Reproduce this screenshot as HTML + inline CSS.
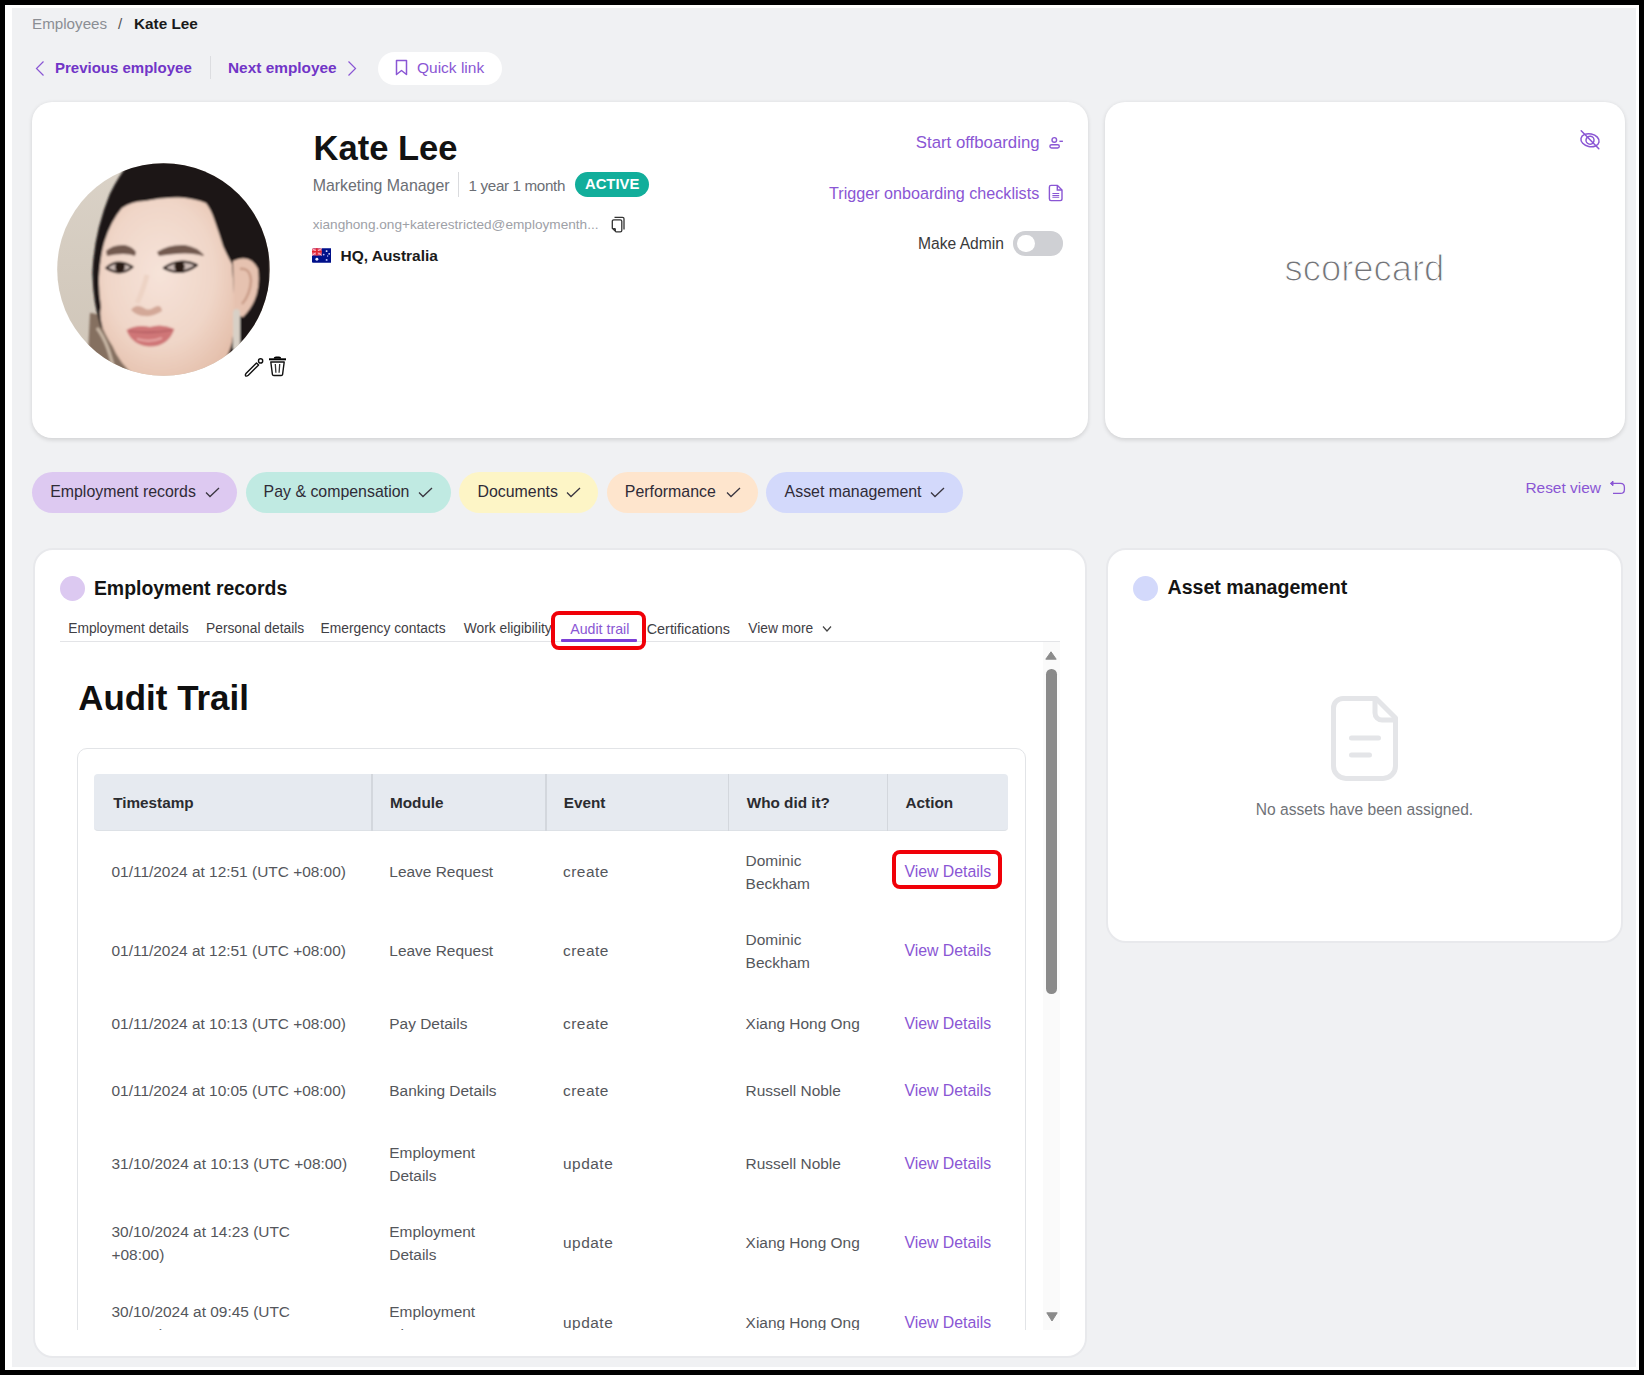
<!DOCTYPE html>
<html><head><meta charset="utf-8">
<style>
*{margin:0;padding:0;box-sizing:border-box}
html,body{width:1644px;height:1375px;overflow:hidden;background:#000}
body{position:relative;font-family:"Liberation Sans",sans-serif;color:#1c1c1c}
.frame{position:absolute;left:5px;top:5px;width:1634px;height:1365px;background:#fff}
.bg{position:absolute;left:12px;top:8px;width:1624px;height:1359px;background:#f0f1f3}
.a{position:absolute;white-space:nowrap;line-height:1}
.card{position:absolute;background:#fff;border-radius:20px}
</style></head><body>
<div class="frame"></div>
<div class="bg"></div>
<div class="a" style="left:32px;top:15.8px;font-size:15.2px;color:#8b8e94;">Employees</div>
<div class="a" style="left:118px;top:15.8px;font-size:15.2px;color:#555;">/</div>
<div class="a" style="left:134px;top:15.7px;font-size:15.3px;font-weight:700;color:#1a1a1a;">Kate Lee</div>
<svg class="a" style="left:34px;top:60px" width="12" height="17" viewBox="0 0 12 17"><path d="M9.5 1.5 L2.5 8.5 L9.5 15.5" fill="none" stroke="#8a56d4" stroke-width="1.2"/></svg>
<div class="a" style="left:55px;top:60.3px;font-size:15px;font-weight:700;color:#7135c7;">Previous employee</div>
<div class="a" style="left:210px;top:56px;width:1px;height:23px;background:#dcdde0"></div>
<div class="a" style="left:228px;top:60.0px;font-size:15.4px;font-weight:700;color:#7135c7;">Next employee</div>
<svg class="a" style="left:346px;top:60px" width="12" height="17" viewBox="0 0 12 17"><path d="M2.5 1.5 L9.5 8.5 L2.5 15.5" fill="none" stroke="#8a56d4" stroke-width="1.2"/></svg>
<div class="a" style="left:378px;top:52px;width:124px;height:33px;background:#fff;border-radius:17px"></div>
<svg class="a" style="left:394px;top:59px" width="15" height="17" viewBox="0 0 15 17"><path d="M2.5 1.5 H12.5 V15.5 L7.5 11.5 L2.5 15.5 Z" fill="none" stroke="#8a56d4" stroke-width="1.5" stroke-linejoin="round"/></svg>
<div class="a" style="left:417px;top:59.9px;font-size:15.5px;color:#8a56d4;">Quick link</div>
<div class="card" style="left:32px;top:102px;width:1056px;height:336px;box-shadow:0 1.5px 4px rgba(0,0,0,0.13)"></div>
<div class="card" style="left:1105px;top:102px;width:520px;height:336px;box-shadow:0 1.5px 4px rgba(0,0,0,0.13)"></div>
<div class="a" style="left:313.6px;top:130.8px;font-size:34.5px;font-weight:700;color:#121212;">Kate Lee</div>
<div class="a" style="left:312.7px;top:177.7px;font-size:15.9px;color:#6b6e74;">Marketing Manager</div>
<div class="a" style="left:458px;top:172px;width:1px;height:25px;background:#dadbde"></div>
<div class="a" style="left:468.6px;top:178.3px;font-size:15.2px;color:#6b6e74;letter-spacing:-0.35px;">1 year 1 month</div>
<div class="a" style="left:574.5px;top:172.3px;width:74px;height:25px;border-radius:12.5px;background:#12ae9b"></div>
<div class="a" style="left:585px;top:177.4px;font-size:14.8px;font-weight:700;color:#ffffff;">ACTIVE</div>
<div class="a" style="left:312.7px;top:218.0px;font-size:13.62px;color:#9ea1a7;">xianghong.ong+katerestricted@employmenth...</div>
<div class="a" style="left:340.5px;top:247.5px;font-size:15.48px;font-weight:700;color:#1a1a1a;">HQ, Australia</div>
<div class="a" style="left:915.8px;top:134.5px;font-size:16.8px;color:#8a56d4;">Start offboarding</div>
<div class="a" style="left:829px;top:184.8px;font-size:16.15px;color:#8a56d4;">Trigger onboarding checklists</div>
<div class="a" style="left:918px;top:235.8px;font-size:15.63px;color:#3a3a3a;">Make Admin</div>
<div class="a" style="left:1284.5px;top:251.2px;font-size:36.4px;color:#737478;-webkit-text-stroke:1.1px #fff;">scorecard</div>
<div class="a" style="left:32px;top:471.7px;width:205.2px;height:41.2px;border-radius:21px;background:#ddc9f1"></div>
<div class="a" style="left:50.2px;top:484.0px;font-size:15.9px;color:#2f2b37;">Employment records</div>
<svg class="a" style="left:205px;top:487px" width="15" height="11" viewBox="0 0 15 11"><path d="M1 5.5 L5 9.5 L14 1" fill="none" stroke="#3a3640" stroke-width="1.3"/></svg>
<div class="a" style="left:245.6px;top:471.7px;width:205.3px;height:41.2px;border-radius:21px;background:#c0eae2"></div>
<div class="a" style="left:263.6px;top:484.0px;font-size:15.9px;color:#2f2b37;">Pay &amp; compensation</div>
<svg class="a" style="left:418.3px;top:487px" width="15" height="11" viewBox="0 0 15 11"><path d="M1 5.5 L5 9.5 L14 1" fill="none" stroke="#3a3640" stroke-width="1.3"/></svg>
<div class="a" style="left:459.4px;top:471.7px;width:138.9px;height:41.2px;border-radius:21px;background:#fdf5c6"></div>
<div class="a" style="left:477.5px;top:484.0px;font-size:15.9px;color:#2f2b37;">Documents</div>
<svg class="a" style="left:565.7px;top:487px" width="15" height="11" viewBox="0 0 15 11"><path d="M1 5.5 L5 9.5 L14 1" fill="none" stroke="#3a3640" stroke-width="1.3"/></svg>
<div class="a" style="left:607.2px;top:471.7px;width:150.4px;height:41.2px;border-radius:21px;background:#fee5cd"></div>
<div class="a" style="left:624.8px;top:484.0px;font-size:15.9px;color:#2f2b37;">Performance</div>
<svg class="a" style="left:725.6px;top:487px" width="15" height="11" viewBox="0 0 15 11"><path d="M1 5.5 L5 9.5 L14 1" fill="none" stroke="#3a3640" stroke-width="1.3"/></svg>
<div class="a" style="left:765.9px;top:471.7px;width:196.9px;height:41.2px;border-radius:21px;background:#d3d9fb"></div>
<div class="a" style="left:784.6px;top:484.0px;font-size:15.9px;color:#2f2b37;">Asset management</div>
<svg class="a" style="left:929.7px;top:487px" width="15" height="11" viewBox="0 0 15 11"><path d="M1 5.5 L5 9.5 L14 1" fill="none" stroke="#3a3640" stroke-width="1.3"/></svg>
<div class="a" style="left:1525.4px;top:479.9px;font-size:15.46px;color:#8a56d4;">Reset view</div>
<div class="a" style="left:33px;top:548px;width:1054px;height:810px;border:2px solid #e8e9ec;border-radius:20px;background:#fff"></div>
<div class="a" style="left:60px;top:575.7px;width:25px;height:25px;border-radius:50%;background:#dcc9f1"></div>
<div class="a" style="left:93.9px;top:579.0px;font-size:19.45px;font-weight:700;color:#141414;">Employment records</div>
<div class="a" style="left:68.2px;top:622.4px;font-size:13.8px;color:#3f4045;">Employment details</div>
<div class="a" style="left:206px;top:622.4px;font-size:13.8px;color:#3f4045;">Personal details</div>
<div class="a" style="left:320.6px;top:622.4px;font-size:13.8px;color:#3f4045;">Emergency contacts</div>
<div class="a" style="left:463.8px;top:622.4px;font-size:13.8px;color:#3f4045;">Work eligibility</div>
<div class="a" style="left:646.7px;top:621.9px;font-size:14.4px;color:#3f4045;">Certifications</div>
<div class="a" style="left:748.3px;top:622.4px;font-size:13.8px;color:#3f4045;">View more</div>
<div class="a" style="left:570.2px;top:622.1px;font-size:14.2px;color:#8a56d4;">Audit trail</div>
<svg class="a" style="left:822px;top:625px" width="10" height="8" viewBox="0 0 10 8"><path d="M1 1.5 L5 6 L9 1.5" fill="none" stroke="#444" stroke-width="1.2"/></svg>
<div class="a" style="left:60px;top:640.6px;width:1000px;height:1.2px;background:#e3e4e7"></div>
<div class="a" style="left:561.4px;top:638.8px;width:76px;height:3px;background:#7b3fd6;border-radius:1px"></div>
<div class="a" style="left:551.2px;top:611px;width:94.6px;height:38.6px;border:4.8px solid #f00008;border-radius:8px"></div>
<div class="a" style="left:60px;top:642px;width:1000px;height:688px;overflow:hidden">
<div class="a" style="left:18.299999999999997px;top:38.9px;font-size:34.9px;font-weight:700;color:#0f0f0f;">Audit Trail</div>
<div class="a" style="left:17.4px;top:105.8px;width:949px;height:700px;border:1px solid #e2e4e7;border-radius:10px"></div>
<div class="a" style="left:34px;top:131.5px;width:913.6px;height:57.5px;background:#e6eaf0;border-radius:4px;border-bottom:1px solid #dde1e6"></div>
<div class="a" style="left:311.2px;top:131.5px;width:1.5px;height:57.5px;background:#d3d7dd"></div>
<div class="a" style="left:485.0px;top:131.5px;width:1.5px;height:57.5px;background:#d3d7dd"></div>
<div class="a" style="left:667.8px;top:131.5px;width:1.5px;height:57.5px;background:#d3d7dd"></div>
<div class="a" style="left:826.9px;top:131.5px;width:1.5px;height:57.5px;background:#d3d7dd"></div>
<div class="a" style="left:53.2px;top:153.4px;font-size:15.3px;font-weight:700;color:#2b2c30;">Timestamp</div>
<div class="a" style="left:330px;top:153.4px;font-size:15.3px;font-weight:700;color:#2b2c30;">Module</div>
<div class="a" style="left:503.79999999999995px;top:153.4px;font-size:15.3px;font-weight:700;color:#2b2c30;">Event</div>
<div class="a" style="left:686.7px;top:153.4px;font-size:15.3px;font-weight:700;color:#2b2c30;">Who did it?</div>
<div class="a" style="left:845.5px;top:153.4px;font-size:15.3px;font-weight:700;color:#2b2c30;">Action</div>
<div class="a" style="left:51.5px;top:222.4px;font-size:15.45px;color:#54565b;">01/11/2024 at 12:51 (UTC +08:00)</div>
<div class="a" style="left:329.3px;top:222.4px;font-size:15.45px;color:#54565b;">Leave Request</div>
<div class="a" style="left:503px;top:222.4px;font-size:15.45px;color:#54565b;letter-spacing:0.5px;">create</div>
<div class="a" style="left:685.6px;top:211.2px;font-size:15.45px;color:#54565b;">Dominic</div>
<div class="a" style="left:685.6px;top:233.7px;font-size:15.45px;color:#54565b;">Beckham</div>
<div class="a" style="left:844.4px;top:222.1px;font-size:15.85px;color:#8a56d4;">View Details</div>
<div class="a" style="left:51.5px;top:301.4px;font-size:15.45px;color:#54565b;">01/11/2024 at 12:51 (UTC +08:00)</div>
<div class="a" style="left:329.3px;top:301.4px;font-size:15.45px;color:#54565b;">Leave Request</div>
<div class="a" style="left:503px;top:301.4px;font-size:15.45px;color:#54565b;letter-spacing:0.5px;">create</div>
<div class="a" style="left:685.6px;top:290.2px;font-size:15.45px;color:#54565b;">Dominic</div>
<div class="a" style="left:685.6px;top:312.7px;font-size:15.45px;color:#54565b;">Beckham</div>
<div class="a" style="left:844.4px;top:301.1px;font-size:15.85px;color:#8a56d4;">View Details</div>
<div class="a" style="left:51.5px;top:374.1px;font-size:15.45px;color:#54565b;">01/11/2024 at 10:13 (UTC +08:00)</div>
<div class="a" style="left:329.3px;top:374.1px;font-size:15.45px;color:#54565b;">Pay Details</div>
<div class="a" style="left:503px;top:374.1px;font-size:15.45px;color:#54565b;letter-spacing:0.5px;">create</div>
<div class="a" style="left:685.6px;top:374.1px;font-size:15.45px;color:#54565b;">Xiang Hong Ong</div>
<div class="a" style="left:844.4px;top:373.8px;font-size:15.85px;color:#8a56d4;">View Details</div>
<div class="a" style="left:51.5px;top:441.2px;font-size:15.45px;color:#54565b;">01/11/2024 at 10:05 (UTC +08:00)</div>
<div class="a" style="left:329.3px;top:441.2px;font-size:15.45px;color:#54565b;">Banking Details</div>
<div class="a" style="left:503px;top:441.2px;font-size:15.45px;color:#54565b;letter-spacing:0.5px;">create</div>
<div class="a" style="left:685.6px;top:441.2px;font-size:15.45px;color:#54565b;">Russell Noble</div>
<div class="a" style="left:844.4px;top:440.9px;font-size:15.85px;color:#8a56d4;">View Details</div>
<div class="a" style="left:51.5px;top:514.2px;font-size:15.45px;color:#54565b;">31/10/2024 at 10:13 (UTC +08:00)</div>
<div class="a" style="left:329.3px;top:503.0px;font-size:15.45px;color:#54565b;">Employment</div>
<div class="a" style="left:329.3px;top:525.5px;font-size:15.45px;color:#54565b;">Details</div>
<div class="a" style="left:503px;top:514.2px;font-size:15.45px;color:#54565b;letter-spacing:0.5px;">update</div>
<div class="a" style="left:685.6px;top:514.2px;font-size:15.45px;color:#54565b;">Russell Noble</div>
<div class="a" style="left:844.4px;top:513.9px;font-size:15.85px;color:#8a56d4;">View Details</div>
<div class="a" style="left:51.5px;top:582.2px;font-size:15.45px;color:#54565b;">30/10/2024 at 14:23 (UTC</div>
<div class="a" style="left:51.5px;top:604.7px;font-size:15.45px;color:#54565b;">+08:00)</div>
<div class="a" style="left:329.3px;top:582.2px;font-size:15.45px;color:#54565b;">Employment</div>
<div class="a" style="left:329.3px;top:604.7px;font-size:15.45px;color:#54565b;">Details</div>
<div class="a" style="left:503px;top:593.4px;font-size:15.45px;color:#54565b;letter-spacing:0.5px;">update</div>
<div class="a" style="left:685.6px;top:593.4px;font-size:15.45px;color:#54565b;">Xiang Hong Ong</div>
<div class="a" style="left:844.4px;top:593.1px;font-size:15.85px;color:#8a56d4;">View Details</div>
<div class="a" style="left:51.5px;top:662.2px;font-size:15.45px;color:#54565b;">30/10/2024 at 09:45 (UTC</div>
<div class="a" style="left:51.5px;top:684.7px;font-size:15.45px;color:#54565b;">+08:00)</div>
<div class="a" style="left:329.3px;top:662.2px;font-size:15.45px;color:#54565b;">Employment</div>
<div class="a" style="left:329.3px;top:684.7px;font-size:15.45px;color:#54565b;">History</div>
<div class="a" style="left:503px;top:673.4px;font-size:15.45px;color:#54565b;letter-spacing:0.5px;">update</div>
<div class="a" style="left:685.6px;top:673.4px;font-size:15.45px;color:#54565b;">Xiang Hong Ong</div>
<div class="a" style="left:844.4px;top:673.1px;font-size:15.85px;color:#8a56d4;">View Details</div>
<div class="a" style="left:832.3px;top:208px;width:109.4px;height:38.6px;border:4.8px solid #f00008;border-radius:8px"></div>
<div class="a" style="left:983px;top:0;width:17px;height:688px;background:#fafafa"></div>
<svg class="a" style="left:985px;top:9px" width="12" height="9" viewBox="0 0 12 9"><path d="M6 0.8 L11.2 8.2 L0.8 8.2 Z" fill="#8a8a8a" stroke="#8a8a8a" stroke-width="1" stroke-linejoin="round"/></svg>
<div class="a" style="left:986px;top:26.5px;width:10.5px;height:325px;border-radius:5.25px;background:#8a8a8a"></div>
<svg class="a" style="left:985.5px;top:670px" width="12" height="10" viewBox="0 0 12 10"><path d="M0.8 0.8 L11.2 0.8 L6 9 Z" fill="#8a8a8a" stroke="#8a8a8a" stroke-width="1" stroke-linejoin="round"/></svg>
</div>
<div class="a" style="left:1106px;top:548px;width:517px;height:395px;border:2px solid #e8e9ec;border-radius:20px;background:#fff"></div>
<div class="a" style="left:1133px;top:575.8px;width:25px;height:25px;border-radius:50%;background:#d3d9fb"></div>
<div class="a" style="left:1167.5px;top:578.2px;font-size:19.6px;font-weight:700;color:#141414;">Asset management</div>
<svg class="a" style="left:1329px;top:694px" width="71" height="89" viewBox="0 0 71 89"><path d="M14 4.5 H47 L66.5 24 V72 A12.5 12.5 0 0 1 54 84.5 H17 A12.5 12.5 0 0 1 4.5 72 V14 A9.5 9.5 0 0 1 14 4.5 Z" fill="none" stroke="#e4e5e8" stroke-width="5" stroke-linejoin="round"/><path d="M46 6 V19 A7 7 0 0 0 53 26 H65" fill="none" stroke="#e4e5e8" stroke-width="5"/><path d="M22.5 44 H49.5 M22.5 61 H40.5" stroke="#e4e5e8" stroke-width="5" stroke-linecap="round"/></svg>
<div class="a" style="left:1255.8px;top:801.5px;font-size:15.58px;color:#6f7277;">No assets have been assigned.</div>
<svg class="a" style="left:611px;top:216px" width="15" height="17" viewBox="0 0 15 17"><path d="M3.5 1.3 H11.5 Q13 1.3 13 2.8 V13.5" fill="none" stroke="#333" stroke-width="1.3"/><path d="M2.8 3.8 H9.3 Q10.8 3.8 10.8 5.3 V14.5 Q10.8 15.9 9.3 15.9 H5 L1.3 12.2 V5.3 Q1.3 3.8 2.8 3.8 Z" fill="#fff" stroke="#333" stroke-width="1.3" stroke-linejoin="round"/><path d="M1.5 12 H3.6 Q5 12 5 13.4 V15.8 Z" fill="#333"/></svg>
<svg class="a" style="left:311.5px;top:247.5px" width="19.5" height="15" viewBox="0 0 20 15"><rect x="0" y="0" width="20" height="15" rx="1" fill="#00108a"/><rect x="0" y="0" width="10" height="7.5" fill="#f0607a"/><path d="M0 0 L10 7.5 M10 0 L0 7.5" stroke="#fff" stroke-width="1" opacity="0.6"/><path d="M5 0 V7.5 M0 3.75 H10" stroke="#e0242e" stroke-width="1.6"/><circle cx="5" cy="11.3" r="1.5" fill="#e8e8ff"/><circle cx="15" cy="3" r="1" fill="#e8e8ff"/><circle cx="12" cy="6.5" r="0.9" fill="#c0c0ff"/><circle cx="17.6" cy="5.8" r="0.9" fill="#e8e8ff"/><circle cx="16" cy="8" r="0.7" fill="#b0b0ff"/><circle cx="15" cy="12" r="1" fill="#c8c8ff"/></svg>
<svg class="a" style="left:243px;top:356px" width="22" height="22" viewBox="0 0 22 22"><path d="M3.2 17.2 L13.5 6.9 L15.6 9 L5.3 19.3 Q3.6 20.6 2.6 19.9 Q1.9 18.9 3.2 17.2 Z" fill="none" stroke="#111" stroke-width="1.4" stroke-linejoin="round"/><circle cx="17.6" cy="4.9" r="2.1" fill="none" stroke="#111" stroke-width="1.4"/></svg>
<svg class="a" style="left:268px;top:356px" width="19" height="22" viewBox="0 0 19 22"><path d="M1 3.3 H18" stroke="#000" stroke-width="2"/><path d="M6.5 2.5 Q6.5 1.3 8 1.3 H11 Q12.5 1.3 12.5 2.5" fill="#000" stroke="#000" stroke-width="1.4"/><path d="M2.8 6 H16.2 L14.6 18.3 Q14.4 19.5 13.2 19.5 H5.8 Q4.6 19.5 4.4 18.3 Z" fill="none" stroke="#111" stroke-width="1.4" stroke-linejoin="round"/><path d="M7.3 8 L7.9 16.8 M11.7 8 L11.1 16.8" stroke="#333" stroke-width="1.3"/></svg>
<svg class="a" style="left:1047px;top:136px" width="17" height="14" viewBox="0 0 17 14"><circle cx="7.3" cy="3.9" r="2.3" fill="none" stroke="#8a56d4" stroke-width="1.4"/><rect x="2.9" y="8.7" width="9.4" height="3.3" rx="1.65" fill="none" stroke="#8a56d4" stroke-width="1.4"/><path d="M12.4 5.3 H15.9" stroke="#8a56d4" stroke-width="1.4"/></svg>
<svg class="a" style="left:1048px;top:184px" width="16" height="18" viewBox="0 0 16 18"><path d="M3 1.4 H9.5 L14 5.9 V14.8 Q14 16.6 12.2 16.6 H3 Q1.4 16.6 1.4 14.8 V3 Q1.4 1.4 3 1.4 Z" fill="none" stroke="#8a56d4" stroke-width="1.4" stroke-linejoin="round"/><path d="M9.3 1.5 V6 H14" fill="none" stroke="#8a56d4" stroke-width="1.4"/><path d="M4.4 9.5 H11.2 M4.4 11.5 H11.2 M4.4 13.3 H11.2" stroke="#8a56d4" stroke-width="1.1"/></svg>
<div class="a" style="left:1013px;top:231.4px;width:50px;height:24.3px;border-radius:12.2px;background:#cfd0d4"></div>
<div class="a" style="left:1017px;top:234.8px;width:17.5px;height:17.5px;border-radius:50%;background:#fff"></div>
<svg class="a" style="left:1578px;top:128px" width="24" height="24" viewBox="0 0 24 24"><g transform="rotate(12 12 12.2)"><ellipse cx="12" cy="12.2" rx="9.2" ry="6.4" fill="none" stroke="#8a56d4" stroke-width="1.5"/><circle cx="12" cy="12.2" r="4" fill="none" stroke="#8a56d4" stroke-width="1.5"/></g><path d="M3.2 2.8 L20.8 20.7" stroke="#8a56d4" stroke-width="1.5" stroke-linecap="round"/></svg>
<svg class="a" style="left:1608px;top:479px" width="19" height="17" viewBox="0 0 19 17"><path d="M5 4.4 H12.5 Q16.4 4.4 16.4 8.4 V10.4 Q16.4 14.4 12.5 14.4 H5" fill="none" stroke="#8a56d4" stroke-width="1.3"/><path d="M2.3 4.4 L5 2.1 V6.7 Z" fill="#8a56d4" stroke="#8a56d4" stroke-width="1" stroke-linejoin="round"/></svg>
<svg class="a" style="left:57px;top:162.5px" width="213" height="213" viewBox="0 0 213 213">
<defs><clipPath id="pc"><circle cx="106.5" cy="106.5" r="106.3"/></clipPath>
<filter id="bl" x="-10%" y="-10%" width="120%" height="120%"><feGaussianBlur stdDeviation="1.1"/></filter>
<radialGradient id="skin" cx="0.45" cy="0.42" r="0.65"><stop offset="0" stop-color="#f6e3d9"/><stop offset="0.6" stop-color="#f0d6c8"/><stop offset="1" stop-color="#e4bfab"/></radialGradient>
<linearGradient id="bgb" x1="0" y1="0" x2="0" y2="1"><stop offset="0" stop-color="#dad2c7"/><stop offset="1" stop-color="#cfc5b8"/></linearGradient>
</defs>
<g clip-path="url(#pc)">
<rect width="213" height="213" fill="url(#bgb)"/>
<g filter="url(#bl)">
<path d="M33 150 Q48 150 60 175 L82 213 L30 213 Z" fill="#857060"/>
<path d="M40 165 Q52 180 58 213" fill="none" stroke="#c9b8a6" stroke-width="3"/>
<path d="M73.7 -2 L213 -2 L213 160 Q205 182 185 196 L150 196 L60 150 L44 165 Q36 140 35.4 109.7 Q37 70 52.8 31.1 Q62 12 73.7 -2 Z" fill="#1d1715"/>
<path d="M65 45 Q76 38 87.7 38.1 Q105 34 122.6 34.6 Q138 36 148.8 39.9 Q154 46 157.5 57.3 Q162 70 166.2 83.5 Q171 94 175 101 L178.5 153.3 Q177 168 175 179.5 Q172 190 168 197 Q150 213 130 215 L80 215 Q62 200 55.5 183 Q47 170 44.9 162 Q42 150 44.1 144.5 Q41 125 42.3 109.7 Q44 90 47.6 78.3 Q54 58 65 45 Z" fill="url(#skin)"/>
<path d="M176 98 Q193 90 201 106 Q205 135 186 154 L177 152 Z" fill="#e6c2b0"/>
<path d="M183 106 Q193 104 194 118 Q193 132 185 141" fill="none" stroke="#c99c88" stroke-width="2.5"/>
<path d="M49 88 Q56 81 68 82 Q76 84 79 89 L78 93 Q68 89 50 93 Z" fill="#735a50"/>
<path d="M100 89 Q112 81 128 82 Q140 84 147 92 L146 93 Q132 88 102 93 Z" fill="#735a50"/>
<path d="M49.3 105 Q60 95 75.5 104 Q64 114 49.3 105 Z" fill="#cdbcb6" stroke="#2a1c19" stroke-width="2.2" stroke-linejoin="round"/>
<circle cx="63" cy="104" r="5" fill="#2b1b18"/>
<path d="M106.9 105 Q122 94 140 102 Q124 114 106.9 105 Z" fill="#cdbcb6" stroke="#2a1c19" stroke-width="2.2" stroke-linejoin="round"/>
<circle cx="122.5" cy="103.5" r="5.2" fill="#2b1b18"/>
<path d="M90 112 Q86 128 80 140" fill="none" stroke="#edd3c5" stroke-width="5"/>
<path d="M74 147 Q79 140 87 145 Q91 148 96 145 Q104 140 105 148 Q96 154 88 153 Q80 153 74 147 Z" fill="#d3a898"/>
<path d="M69.4 167 Q80 161 93 164 Q105 160 117.4 166 Q111 184 92 183.5 Q75 182 69.4 167 Z" fill="#cf7677"/>
<path d="M72 168 Q94 171 115 167" fill="none" stroke="#a9545a" stroke-width="1.2"/>
<path d="M80 176 Q93 180 105 175" fill="none" stroke="#e7a5a3" stroke-width="2.2"/>
<rect x="176" y="146" width="7" height="42" rx="3.5" fill="#d8d0c6"/>
</g>
</g></svg>
</body></html>
